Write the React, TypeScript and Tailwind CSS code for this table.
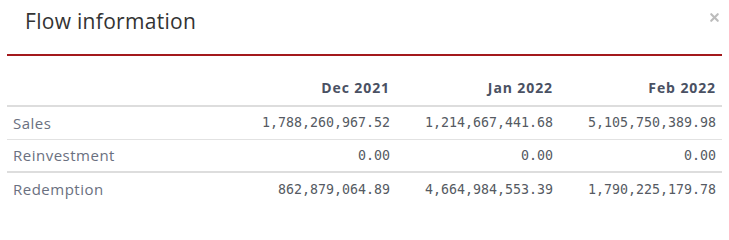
import { X } from "lucide-react"

type Row = {
    label: string
    values: string[]
    border: string
}

const months = ["Dec 2021", "Jan 2022", "Feb 2022"]

const rows: Row[] = [
    { label: "Sales", values: ["1,788,260,967.52", "1,214,667,441.68", "5,105,750,389.98"], border: "border-b border-[#e2e2e2]" },
    { label: "Reinvestment", values: ["0.00", "0.00", "0.00"], border: "border-b-2 border-[#dddddd]" },
    { label: "Redemption", values: ["862,879,064.89", "4,664,984,553.39", "1,790,225,179.78"], border: "" },
]

const sans = "font-['Open_Sans',sans-serif]"
const mono = "font-['DejaVu_Sans_Mono',monospace]"

export default function App() {
    return (
        <div className={`w-[729px] h-[240px] bg-white ${sans}`}>
            {/* Header */}
            <div className="relative mx-[7px] h-[56px] border-b-2 border-[#a3191c]">
                <h4 className="pl-[18px] pt-[7px] text-[21px] leading-[28px] text-[#333333] tracking-[0.3px]">
                    Flow information
                </h4>
                <button className="absolute right-[1px] top-[11px] text-[#bcbcbc]">
                    <X className="w-[13px] h-[13px]" strokeWidth={4} />
                </button>
            </div>

            {/* Table */}
            <div className="mx-[7px]">
                <div className="grid grid-cols-[1fr_163px_163px_163px] h-[51px] items-end border-b-2 border-[#dddddd]">
                    <div />
                    {months.map((m) => (
                        <div key={m} className="pr-[6px] pb-[7px] text-right text-[14px] leading-[20px] font-bold tracking-[0.9px] text-[#4a5163]">
                            {m}
                        </div>
                    ))}
                </div>
                {rows.map((r) => (
                    <div key={r.label} className={`grid grid-cols-[1fr_163px_163px_163px] items-center h-[33px] ${r.border}`}>
                        <div className="pl-[6px] text-[15px] tracking-[0.5px] text-[#6a7080]">{r.label}</div>
                        {r.values.map((v, i) => (
                            <div key={i} className={`pr-[6px] text-right text-[13.3px] text-[#555a62] ${mono}`}>
                                {v}
                            </div>
                        ))}
                    </div>
                ))}
            </div>
        </div>
    )
}
